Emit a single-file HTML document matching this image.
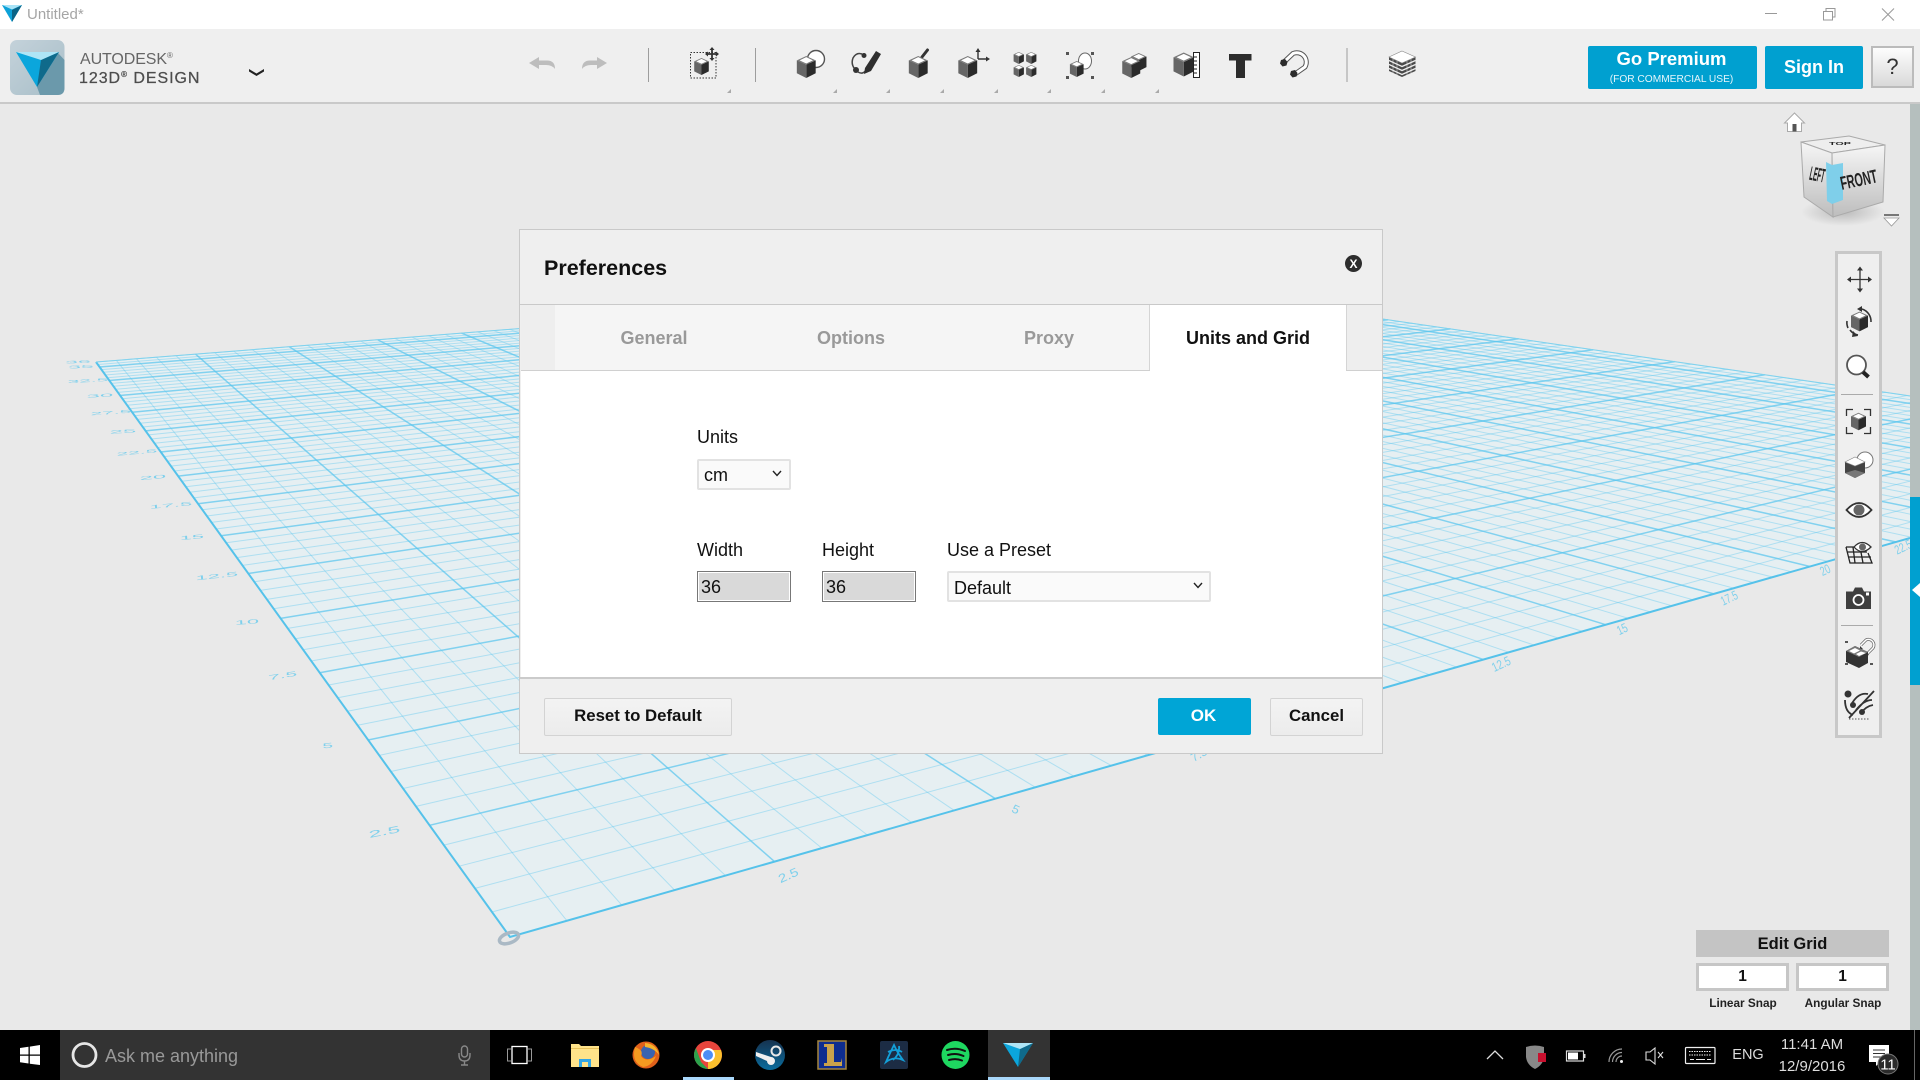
<!DOCTYPE html>
<html lang="en"><head><meta charset="utf-8"><title>Untitled*</title>
<style>
html,body{margin:0;padding:0;width:1920px;height:1080px;overflow:hidden;background:#e9e9e9;font-family:"Liberation Sans",Arial,sans-serif;color:#111}
.a{position:absolute}
.t{position:absolute;white-space:nowrap;line-height:20px;height:20px}
svg{position:absolute;left:0;top:0}
.c{text-align:center}
.b{font-weight:bold}
</style></head>
<body>
<svg id="g" width="1920" height="1080" viewBox="0 0 1920 1080">
<polygon points="510,937 2240,444 1122,281 96,362" fill="#e6eff2"/>
<g id="lines" fill="none" stroke="#55c4ee"></g>
<path d="M96,362 L510,937 L1910,538" fill="none" stroke="#55c2ea" stroke-width="2"/>
<path d="M96,362 L1122,281 L1910,396" fill="none" stroke="#7fd2ee" stroke-width="1"/>
<ellipse cx="509" cy="938" rx="10" ry="5" transform="rotate(-20 509 938)" fill="none" stroke="#aab9c5" stroke-width="3.500"/>
<g font-family="Liberation Sans,Arial,sans-serif" font-size="10" fill="#7fd0ec" text-anchor="middle">
<text transform="translate(385,835) rotate(-11) scale(2.3,.95)">2.5</text>
<text transform="translate(328,748) rotate(-6) scale(1.9,.7)">5</text>
<text transform="translate(283,678) rotate(-9) scale(2.1,.7)">7.5</text>
<text transform="translate(247,624) rotate(-4) scale(2.2,.6)">10</text>
<text transform="translate(217,578) rotate(-6) scale(2.2,.6)">12.5</text>
<text transform="translate(192,539) rotate(-5) scale(2.2,.55)">15</text>
<text transform="translate(171,507) rotate(-5) scale(2.2,.5)">17.5</text>
<text transform="translate(153,479) rotate(-5) scale(2.4,.5)">20</text>
<text transform="translate(137,454) rotate(-5) scale(2.1,.45)">22.5</text>
<text transform="translate(123,433) rotate(-3) scale(2.4,.45)">25</text>
<text transform="translate(111,414) rotate(-4) scale(2.1,.42)">27.5</text>
<text transform="translate(100,397) rotate(-3) scale(2.4,.42)">30</text>
<text transform="translate(88,382) rotate(-3) scale(2.1,.4)">32.5</text>
<text transform="translate(81,368) rotate(-2) scale(2.3,.38)">35</text>
<text transform="translate(78,363) rotate(-2) scale(2.3,.35)">36</text>
<text transform="translate(790,879) rotate(-24) scale(1.5,1.2)">2.5</text>
<text transform="translate(1014,813) rotate(25) scale(1.3,1.2)">5</text>
<text transform="translate(1201,758) rotate(-30) scale(1.2,1.2)">7.5</text>
<text transform="translate(1503,668) rotate(-25) scale(1,1.3)">12.5</text>
<text transform="translate(1624,633) rotate(-25) scale(.95,1.3)">15</text>
<text transform="translate(1731,602) rotate(-25) scale(.9,1.3)">17.5</text>
<text transform="translate(1827,574) rotate(-25) scale(.9,1.3)">20</text>
<text transform="translate(1905,551) rotate(-25) scale(.9,1.3)">22.5</text>
</g>
</svg>
<script>
(function(){
 var a=4907.5,b=-199.74,c=510,d=136.82,e=232.94,f=937,g=1.41852,h=2.23187;
 function H(u,v){var w=g*u+h*v+1;return [((a*u+b*v+c)/w).toFixed(1),((d*u+e*v+f)/w).toFixed(1)];}
 var s='';
 for(var i=1;i<=72;i++){
  var m=i%5==0,p,q,t=i/72;
  p=H(t,0);q=H(t,1);
  s+='<line x1="'+p[0]+'" y1="'+p[1]+'" x2="'+q[0]+'" y2="'+q[1]+'" stroke-width="'+(m?1.5:1)+'" stroke-opacity="'+(m?.7:.38)+'"/>';
  p=H(0,t);q=H(1,t);
  s+='<line x1="'+p[0]+'" y1="'+p[1]+'" x2="'+q[0]+'" y2="'+q[1]+'" stroke-width="'+(m?1.5:1)+'" stroke-opacity="'+(m?.7:.38)+'"/>';
 }
 document.getElementById('lines').innerHTML=s;
})();
</script>

<!-- title bar + toolbar -->
<div class="a" style="left:0;top:0;width:1920px;height:29px;background:#fff"></div>
<div class="a" style="left:0;top:29px;width:1920px;height:73px;background:#efefef;border-bottom:2px solid #c9c9c9"></div>
<div class="t" style="left:27px;top:5px;font-size:15px;color:#a5a5a5">Untitled*</div>
<div class="t" style="left:80px;top:46px;font-size:16px;color:#666;letter-spacing:-.1px">AUTODESK<span style="font-size:8px;vertical-align:6px">®</span></div>
<div class="t" style="left:79px;top:65px;font-size:16px;color:#4d4d4d;letter-spacing:.95px;-webkit-text-stroke:.25px #4d4d4d">123D<span style="font-size:8px;vertical-align:6px">®</span> DESIGN</div>

<!-- scrollbar -->
<div class="a" style="left:1910px;top:104px;width:10px;height:926px;background:#b5bfbe"></div>
<div class="a" style="left:1910px;top:497px;width:10px;height:188px;background:#00a0d0"></div>

<!-- premium buttons -->
<div class="a" style="left:1588px;top:46px;width:169px;height:43px;background:#00a0d0;border-radius:2px"></div>
<div class="t c b" style="left:1587px;top:49px;width:169px;font-size:18.5px;color:#fff">Go Premium</div>
<div class="t c" style="left:1587px;top:70px;width:169px;font-size:10.2px;color:#e4f5fb">(FOR COMMERCIAL USE)</div>
<div class="a" style="left:1765px;top:46px;width:98px;height:43px;background:#00a0d0;border-radius:2px"></div>
<div class="t c b" style="left:1765px;top:57px;width:98px;font-size:18px;color:#fff">Sign In</div>
<div class="a" style="left:1871px;top:46px;width:39px;height:38px;border:2px solid #bbb;background:linear-gradient(#fdfdfd,#d9d9d9)"></div>
<div class="t c" style="left:1871px;top:57px;width:43px;font-size:22px;color:#333">?</div>

<!-- dialog -->
<div class="a" style="left:519px;top:229px;width:862px;height:523px;background:#efefef;border:1px solid #c9c9c9"></div>
<div class="a" style="left:520px;top:304px;width:862px;height:1px;background:#c9c9c9"></div>
<div class="a" style="left:521px;top:305px;width:861px;height:65px;background:#eeeeee"></div>
<div class="a" style="left:555px;top:305px;width:594px;height:65px;background:#f5f5f5"></div>
<div class="a" style="left:1149px;top:305px;width:198px;height:66px;background:#fff;border-left:1px solid #d5d5d5;border-right:1px solid #d5d5d5;box-sizing:border-box"></div>
<div class="a" style="left:521px;top:370px;width:861px;height:1px;background:#d0d0d0"></div>
<div class="a" style="left:1150px;top:370px;width:196px;height:1px;background:#fff"></div>
<div class="a" style="left:521px;top:371px;width:861px;height:306px;background:#fff"></div>
<div class="a" style="left:520px;top:677px;width:862px;height:2px;background:#cbcbcb"></div>
<div class="t b" style="left:544px;top:258px;font-size:21.5px;line-height:20px;color:#111">Preferences</div>
<div class="t c b" style="left:554px;top:328px;width:200px;font-size:18px;color:#999">General</div>
<div class="t c b" style="left:751px;top:328px;width:200px;font-size:18px;color:#999">Options</div>
<div class="t c b" style="left:949px;top:328px;width:200px;font-size:18px;color:#999">Proxy</div>
<div class="t c b" style="left:1148px;top:328px;width:200px;font-size:18px;color:#111">Units and Grid</div>
<div class="t" style="left:697px;top:427px;font-size:18px">Units</div>
<div class="a" style="left:697px;top:459px;width:90px;height:27px;border:2px solid #e2e2e2;border-radius:2px;background:#fafafa"></div>
<div class="t" style="left:704px;top:465px;font-size:18px">cm</div>
<div class="t" style="left:697px;top:540px;font-size:18px">Width</div>
<div class="t" style="left:822px;top:540px;font-size:18px">Height</div>
<div class="t" style="left:947px;top:540px;font-size:18px">Use a Preset</div>
<div class="a" style="left:697px;top:571px;width:92px;height:29px;border:1px solid #777;box-shadow:inset 0 0 0 1px #fff;background:#d9d9d9"></div>
<div class="a" style="left:822px;top:571px;width:92px;height:29px;border:1px solid #777;box-shadow:inset 0 0 0 1px #fff;background:#d9d9d9"></div>
<div class="t" style="left:701px;top:577px;font-size:18px">36</div>
<div class="t" style="left:826px;top:577px;font-size:18px">36</div>
<div class="a" style="left:947px;top:571px;width:260px;height:27px;border:2px solid #e2e2e2;border-radius:2px;background:#fafafa"></div>
<div class="t" style="left:954px;top:578px;font-size:18px">Default</div>
<div class="a" style="left:544px;top:698px;width:186px;height:36px;border:1px solid #d3d3d3;border-radius:2px;background:linear-gradient(#f3f3f3,#ececec)"></div>
<div class="t c b" style="left:544px;top:706px;width:188px;font-size:16.8px">Reset to Default</div>
<div class="a" style="left:1158px;top:698px;width:93px;height:37px;background:#00a5d6;border-radius:2px"></div>
<div class="t c b" style="left:1157px;top:706px;width:93px;font-size:17px;color:#fff">OK</div>
<div class="a" style="left:1270px;top:698px;width:91px;height:36px;border:1px solid #d3d3d3;border-radius:2px;background:linear-gradient(#f3f3f3,#ececec)"></div>
<div class="t c b" style="left:1270px;top:706px;width:93px;font-size:16.8px">Cancel</div>

<!-- edit grid -->
<div class="a" style="left:1696px;top:930px;width:193px;height:27px;background:#c4c4c4"></div>
<div class="t c b" style="left:1696px;top:934px;width:193px;font-size:16.5px;color:#111">Edit Grid</div>
<div class="a" style="left:1696px;top:963px;width:87px;height:22px;border:3px solid #c6c6c6;background:#fff"></div>
<div class="a" style="left:1796px;top:963px;width:87px;height:22px;border:3px solid #c6c6c6;background:#fff"></div>
<div class="t c b" style="left:1696px;top:967px;width:93px;font-size:15.5px">1</div>
<div class="t c b" style="left:1796px;top:967px;width:93px;font-size:15.5px">1</div>
<div class="t c b" style="left:1693px;top:993px;width:100px;font-size:11.8px;color:#222">Linear Snap</div>
<div class="t c b" style="left:1793px;top:993px;width:100px;font-size:11.8px;color:#222">Angular Snap</div>

<!-- right view panel -->
<div class="a" style="left:1835px;top:251px;width:41px;height:481px;background:#efefef;border:3px solid #c8c8c8"></div>

<!-- taskbar -->
<div class="a" style="left:0;top:1030px;width:1920px;height:50px;background:#000"></div>
<div class="a" style="left:60px;top:1030px;width:430px;height:50px;background:#333"></div>
<div class="a" style="left:988px;top:1030px;width:62px;height:50px;background:#333"></div>
<div class="a" style="left:683px;top:1077px;width:51px;height:3px;background:#a9d8fb"></div>
<div class="a" style="left:988px;top:1077px;width:62px;height:3px;background:#a9d8fb"></div>
<div class="t" style="left:105px;top:1046px;font-size:18px;color:#999">Ask me anything</div>
<div class="t c" style="left:1728px;top:1045px;width:40px;font-size:14.5px;color:#ddd">ENG</div>
<div class="t c" style="left:1772px;top:1035px;width:80px;font-size:15px;color:#ddd">11:41 AM</div>
<div class="t c" style="left:1772px;top:1057px;width:80px;font-size:15px;color:#ddd">12/9/2016</div>

<!-- icon layer -->
<svg width="1920" height="1080" viewBox="0 0 1920 1080">
<defs>
<symbol id="cube" viewBox="0 0 24 28" overflow="visible">
<polygon points="12,11 24,5.500 24,22 12,28" fill="#2b2b2b"/>
<polygon points="0,5.500 12,11 12,28 0,22" fill="#666"/>
<polygon points="12,0 24,5.500 12,11 0,5.500" fill="#7a7a7a"/>
<polygon points="12,1.500 20.500,5.500 12,9.500 3.500,5.500" fill="#fff"/>
</symbol>
<linearGradient id="cl" x1="0" y1="0" x2="0" y2="1"><stop offset="0" stop-color="#f6f6f6"/><stop offset="1" stop-color="#bdbdbd"/></linearGradient>
<linearGradient id="lg" x1="0" y1="0" x2="1" y2="1"><stop offset="0" stop-color="#c4d2da"/><stop offset="1" stop-color="#a8bec8"/></linearGradient>
<linearGradient id="st" x1="0" y1="0" x2="0" y2="1"><stop offset="0" stop-color="#16324f"/><stop offset="1" stop-color="#0a6c9d"/></linearGradient>
<radialGradient id="sh" cx=".5" cy=".5" r=".5"><stop offset="0" stop-color="#000" stop-opacity=".2"/><stop offset="1" stop-color="#000" stop-opacity="0"/></radialGradient>
</defs>

<!-- title icon -->
<polygon points="2,5 22,5 12,22" fill="#0ca1d8"/><polygon points="22,5 12,10 12,22" fill="#0a6386"/><polygon points="2,5 22,5 12,9.500" fill="#a9e3f6"/>
<!-- window controls -->
<path d="M1765,13.500H1777" stroke="#999" fill="none"/>
<path d="M1823.500,11.500h9v8.500h-9zM1826,11.500V8.500h9v8.500h-2.500" stroke="#999" fill="none"/>
<path d="M1882,8.500L1894,20.500M1894,8.500L1882,20.500" stroke="#999" fill="none"/>

<!-- logo -->
<rect x="10" y="40" width="54.500" height="55" rx="7" fill="url(#lg)"/>
<path d="M57,52 L64.500,60 V88 Q64.500,95 57.500,95 H40 L37,87Z" fill="#6b99ab"/>
<polygon points="16,52 59,52 37,87" fill="#0ba6dc"/>
<polygon points="59,52 41,60 37,87" fill="#0f6a8b"/>
<polygon points="16,52 59,52 41,60" fill="#aee5f6"/>
<path d="M249,69 L256.500,73.500 L264,69 L264,71.500 L256.500,76 L249,71.500Z" fill="#222"/>

<!-- undo/redo -->
<path d="M529,63 L539,57 V60.500 H547 Q555,60.500 555,69 Q552,65 546,65 H539 V69Z" fill="#bdbdbd"/>
<path d="M607,63 L597,57 V60.500 H590 Q582,60.500 582,69 Q585,65 591,65 H597 V69Z" fill="#bdbdbd"/>
<!-- separators -->
<path d="M648.500,48V82M755.500,48V82M1347,48V82" stroke="#888" stroke-width="1" stroke-opacity=".8"/>

<!-- corner markers -->
<g fill="#aaa"><polygon points="727,93 731,93 731,89"/><polygon points="833,93 837,93 837,89"/><polygon points="886,93 890,93 890,89"/><polygon points="940,93 944,93 944,89"/><polygon points="994,93 998,93 998,89"/><polygon points="1047,93 1051,93 1051,89"/><polygon points="1101,93 1105,93 1105,89"/><polygon points="1155,93 1159,93 1159,89"/></g>

<!-- move -->
<rect x="690.500" y="52.500" width="25.500" height="25.500" fill="none" stroke="#333" stroke-dasharray="1.500 1.500"/>
<use href="#cube" x="694" y="58" width="15" height="17"/>
<path d="M712,48V60M706,54H718" stroke="#333" stroke-width="1.800"/>
<path d="M712,47l2.500,3h-5zM712,61l2.500,-3h-5zM705,54l3,-2.500v5zM719,54l-3,-2.500v5z" fill="#333"/>
<!-- combine -->
<circle cx="816" cy="59" r="8.500" fill="#fff" stroke="#555" stroke-width="1.400"/>
<use href="#cube" x="796" y="56" width="20.500" height="22"/>
<!-- sketch -->
<path d="M864,55 Q857,51 853,58 Q850,66 858,72 Q863,75 866,70" fill="none" stroke="#444" stroke-width="1.500"/>
<circle cx="864" cy="55.500" r="2.500" fill="#333"/><circle cx="856" cy="70" r="3" fill="#333"/>
<path d="M876,51 L881,54 L871,71 L864,74 L865,68Z" fill="#2f2f2f"/>
<!-- modify -->
<path d="M922,57 L927.500,50" stroke="#333" stroke-width="3" stroke-linecap="round"/>
<use href="#cube" x="908" y="56" width="20.500" height="22"/>
<!-- transform -->
<use href="#cube" x="957.500" y="56" width="20.500" height="22"/>
<path d="M978,59V50M978,59H988" stroke="#333" stroke-width="1.400"/><path d="M978,48l2.500,4h-5zM990,59l-4,-2.500v5z" fill="#333"/>
<!-- pattern -->
<use href="#cube" x="1013.500" y="52" width="10.500" height="12"/><use href="#cube" x="1026" y="52" width="10.500" height="12"/>
<use href="#cube" x="1013.500" y="65" width="10.500" height="12"/><use href="#cube" x="1026" y="65" width="10.500" height="12"/>
<!-- boolean -->
<ellipse cx="1085" cy="61" rx="6.500" ry="8" fill="#fff" stroke="#666"/>
<use href="#cube" x="1069.500" y="61" width="14.500" height="16"/>
<g fill="#555"><rect x="1066" y="52" width="3" height="3"/><rect x="1091" y="52" width="3" height="3"/><rect x="1066" y="76" width="3" height="3"/><rect x="1091" y="76" width="3" height="3"/></g>
<!-- group -->
<use href="#cube" x="1131" y="53" width="15.500" height="18"/>
<use href="#cube" x="1121" y="57" width="20.500" height="21"/>
<!-- measure -->
<use href="#cube" x="1173.500" y="51" width="20.500" height="27"/>
<rect x="1193.500" y="52.500" width="6" height="25" fill="#fff" stroke="#222"/>
<path d="M1194,57h3M1194,61h3M1194,65h3M1194,69h3M1194,73h3" stroke="#222"/>
<!-- T -->
<path d="M1229,54H1251.500V60.500H1245V78H1236V60.500H1229Z" fill="#2c2c2c"/>
<!-- magnet -->
<path d="M1284,62 L1293,53.500 A9.500,9.500 0 0 1 1305,67 L1295,74" fill="none" stroke="#555" stroke-width="5"/>
<path d="M1284,62 L1293,53.500 A9.500,9.500 0 0 1 1305,67 L1295,74" fill="none" stroke="#fff" stroke-width="3"/>
<path d="M1281,60l4,-1 2.500,3 -1,3.500 -4,1 -2.500,-3zM1291,71l4,-1 2.500,3 -1,3.500 -4,1 -2.500,-3z" fill="#2c2c2c"/>
<!-- stack -->
<polygon points="1402,51 1415.500,57 1415.500,71 1402,77 1389,71 1389,57" fill="#4a4a4a"/>
<polygon points="1402,51 1415.500,57 1402,63 1389,57" fill="#fff" stroke="#888" stroke-width=".6"/>
<path d="M1389,60.500l13,6 13.500,-6M1389,64.500l13,6 13.500,-6M1389,68.500l13,6 13.500,-6" fill="none" stroke="#eee" stroke-width="1.300"/>
<path d="M1393,59V73M1397,61V75M1407,61V75M1411,59V73" stroke="#eee" stroke-width=".7" stroke-opacity=".7"/>

<!-- home -->
<polygon points="1794.500,113 1804.500,123 1801.500,123 1801.500,131.500 1787.500,131.500 1787.500,123 1784.500,123" fill="#fff" stroke="#aaa"/>
<rect x="1792.500" y="124" width="4" height="7.500" fill="#555"/>
<!-- cube -->
<ellipse cx="1843" cy="212" rx="42" ry="14" fill="url(#sh)"/>
<polygon points="1849,136 1885,145 1832,153 1801,142" fill="#eeeeee" stroke="#aaa"/>
<polygon points="1801,142 1832,153 1833,217 1804,197" fill="url(#cl)" stroke="#aaa"/>
<polygon points="1832,153 1885,145 1883,202 1833,217" fill="url(#cl)" stroke="#aaa"/>
<polygon points="1826,162 1832,165 1843,163 1843,200 1832,204 1827,201" fill="#7fcfea"/>
<text transform="translate(1840,145) scale(.9,.35)" font-size="12" font-weight="bold" text-anchor="middle" fill="#222" font-family="Liberation Sans,Arial,sans-serif">TOP</text>
<text transform="translate(1816,181) rotate(12) scale(.4,1.3)" font-size="15" font-weight="bold" text-anchor="middle" fill="#222" font-family="Liberation Sans,Arial,sans-serif">LEFT</text>
<text transform="translate(1860,186) rotate(-12) scale(.6,1.05)" font-size="18" font-weight="bold" text-anchor="middle" fill="#222" font-family="Liberation Sans,Arial,sans-serif">FRONT</text>
<polygon points="1884,214 1899,214 1899,216 1884,216" fill="#777"/>
<polygon points="1884,218 1899,218 1891.500,226" fill="#fff" stroke="#999" stroke-width=".8"/>

<!-- scrollbar arrow -->
<polygon points="1920,583 1920,597 1912,590" fill="#fff"/>

<!-- right panel -->
<path d="M1860,268V291M1848,279.500H1871" stroke="#333" stroke-width="1.300"/>
<path d="M1860,266.500l3,4h-6zM1860,292.500l3,-4h-6zM1847,279.500l4,-3v6zM1872,279.500l-4,-3v6z" fill="#333"/>
<path d="M1848,328 A13,13 0 0 1 1847,321 M1862,309 A13,13 0 0 1 1871,322 M1850,330 A13,13 0 0 0 1858,335" fill="none" stroke="#333" stroke-width="1.600"/>
<path d="M1857,309l5,-3 0,6zM1853,331l5,5 -6,1z" fill="#333"/>
<use href="#cube" x="1851" y="311" width="17" height="21"/>
<circle cx="1856.500" cy="365" r="9.500" fill="#fff" stroke="#555" stroke-width="1.800"/>
<path d="M1863,372 L1868.500,377" stroke="#222" stroke-width="4"/>
<path d="M1841,394.500H1873M1841,625.500H1873" stroke="#aaa"/>
<path d="M1846.500,416V409.500H1853M1864,409.500H1870.500V416M1870.500,427V433.500H1864M1853,433.500H1846.500V427" fill="none" stroke="#333" stroke-width="1.300"/>
<use href="#cube" x="1851" y="412" width="15" height="19"/>
<circle cx="1865" cy="460" r="8" fill="#fff" stroke="#777"/>
<polygon points="1845,462 1855,457 1865,462 1865,473 1855,478 1845,473" fill="#444"/>
<polygon points="1845,462 1855,457 1865,462 1855,466" fill="#fff" stroke="#888" stroke-width=".6"/>
<polygon points="1855,470 1865,473 1855,478 1845,473" fill="#777"/>
<path d="M1846.500,510 Q1859,496 1871.500,510 Q1859,524 1846.500,510Z" fill="#fff" stroke="#333" stroke-width="1.800"/>
<circle cx="1859" cy="510" r="5.500" fill="#666"/>
<path d="M1846,547H1862M1847,552H1867M1849,557H1871M1853,547L1855,563M1860,547L1863,563M1846,547L1850,563H1872L1868,553" fill="none" stroke="#222" stroke-width="1.300"/>
<path d="M1854,547 Q1862,538 1871,547 Q1862,556 1854,547Z" fill="#fff" stroke="#333" stroke-width="1.300"/><circle cx="1862.500" cy="547" r="3.500" fill="#666"/>
<path d="M1846,591.500H1853L1855,587.500H1862L1864,591.500H1871V609H1846Z" fill="#3f3f3f"/>
<circle cx="1858.500" cy="600" r="5" fill="none" stroke="#fff" stroke-width="1.800"/><rect x="1866" y="592.500" width="3" height="3" fill="#fff"/>
<path d="M1861,645 L1866,640 A5.500,5.500 0 0 1 1873,648 L1868,653" fill="none" stroke="#666" stroke-width="3"/>
<path d="M1861,645 L1866,640 A5.500,5.500 0 0 1 1873,648 L1868,653" fill="none" stroke="#fff" stroke-width="1.500"/>
<path d="M1860,646l3,3 -3,1zM1867,652l2,3 -3,1z" fill="#333"/>
<polygon points="1846,651 1855,646 1868,652 1868,663 1859,668 1846,662" fill="#333"/>
<polygon points="1846,651 1855,646 1868,652 1859,657" fill="#777"/>
<polygon points="1849,651 1855,648 1860,650.500 1854,653.500" fill="#fff"/><polygon points="1856,654 1861,651.500 1866,653 1859,656" fill="#fff"/>
<path d="M1845,642h3M1845,664h3M1870,664h3" stroke="#222" stroke-width="1.500"/>
<path d="M1845,700 Q1845,712 1853,715 M1851,705 Q1858,692 1868,694 M1856,710 Q1864,700 1872,700 M1860,714 Q1866,706 1873,705 M1849,718 L1874,691" fill="none" stroke="#333" stroke-width="1.800"/>
<circle cx="1848" cy="694" r="3.500" fill="#333"/><circle cx="1853" cy="705" r="3" fill="#333"/><circle cx="1862" cy="712" r="3" fill="#333"/>
<path d="M1849,719h20" stroke="#555" stroke-dasharray="1.500 1.500"/>

<!-- windows logo -->
<polygon points="20,1048 28.500,1046.800 28.500,1054.500 20,1054.500" fill="#fff"/><polygon points="29.800,1046.600 40,1045 40,1054.500 29.800,1054.500" fill="#fff"/>
<polygon points="20,1055.800 28.500,1055.800 28.500,1063.500 20,1062.300" fill="#fff"/><polygon points="29.800,1055.800 40,1055.800 40,1065 29.800,1063.700" fill="#fff"/>
<circle cx="84.500" cy="1055" r="11.500" fill="none" stroke="#e6e6e6" stroke-width="2.800"/>
<!-- mic -->
<rect x="461.500" y="1046" width="6" height="11" rx="3" fill="none" stroke="#888" stroke-width="1.400"/>
<path d="M459,1053 V1055 Q459,1061 464.500,1061 Q470,1061 470,1055 V1053M464.500,1061V1065M461,1065H468" fill="none" stroke="#888" stroke-width="1.400"/>
<!-- task view -->
<rect x="512" y="1046.500" width="15" height="17" fill="none" stroke="#fff" stroke-width="1.300"/>
<path d="M511,1049H507.500V1061H511M528,1049H531.500V1061H528" fill="none" stroke="#999"/>
<!-- explorer -->
<path d="M571,1044h8l2,2h18v21H571z" fill="#ffe38a"/><path d="M571,1048h28v1H571z" fill="#e8c25a"/>
<path d="M579,1059h12v8h-3v-5h-6v5h-3z" fill="#33a6e6"/>
<!-- firefox -->
<circle cx="646" cy="1055" r="13.500" fill="#e0601a"/><circle cx="648" cy="1052" r="7" fill="#3a63b0"/><path d="M635,1047 Q644,1050 641,1056 Q646,1063 656,1056 Q652,1066 643,1067 Q631,1062 635,1047Z" fill="#f59a20"/><path d="M645,1043 Q657,1044 659,1055 Q654,1048 645,1047Z" fill="#f7b32b"/>
<!-- chrome -->
<circle cx="708" cy="1055" r="14" fill="#e8453c"/><path d="M695.900,1048 L701,1062 L708,1069 A14,14 0 0 1 695.900,1048Z" fill="#2ba24c"/><path d="M708,1069 A14,14 0 0 0 721,1050 L708,1050Z" fill="#fbc02d"/>
<circle cx="708" cy="1055" r="7" fill="#fff"/><circle cx="708" cy="1055" r="5" fill="#4d8ef6"/>
<!-- steam -->
<circle cx="770" cy="1055" r="15" fill="url(#st)"/><circle cx="776" cy="1051" r="4.500" fill="none" stroke="#e8e8e8" stroke-width="2"/>
<path d="M756,1056 L767,1061 A4,4 0 1 0 771,1057 L756,1052Z" fill="#f0f0f0"/>
<!-- league -->
<rect x="818" y="1041" width="28" height="28" fill="#0e2d8f" stroke="#a6863e" stroke-width="1.500"/>
<path d="M824,1044H834V1062H841L842,1058V1066H824V1063H827V1047H824Z" fill="#c9a24b"/>
<!-- battle.net -->
<rect x="880" y="1041" width="28" height="28" rx="2" fill="#1c2c44"/>
<path d="M894,1045 Q890,1053 886,1062 Q894,1056 903,1060 Q897,1052 894,1045ZM888,1052 Q896,1048 902,1052M893,1060 Q900,1054 899,1046" fill="none" stroke="#139fd8" stroke-width="1.800"/>
<!-- spotify -->
<circle cx="955.500" cy="1055" r="14" fill="#1ed760"/>
<path d="M947,1050 Q956,1047 965,1051M948,1055 Q956,1052.500 963.500,1056M949,1060 Q956,1058 962,1060.500" fill="none" stroke="#111" stroke-width="2" stroke-linecap="round"/>
<!-- 123d -->
<polygon points="1003,1043 1033,1043 1018,1067" fill="#0ba6dc"/><polygon points="1033,1043 1020,1049 1018,1067" fill="#0f6a8b"/><polygon points="1003,1043 1033,1043 1020,1049" fill="#aee5f6"/>

<!-- tray -->
<path d="M1487,1059 L1495,1051 L1503,1059" fill="none" stroke="#ddd" stroke-width="1.300"/>
<path d="M1526,1047 Q1535,1044 1544,1047 V1057 Q1543,1065 1535,1069 Q1527,1065 1526,1057Z" fill="#888"/>
<rect x="1538" y="1053" width="8" height="9" fill="#c8102e"/>
<rect x="1566.500" y="1051" width="17" height="10" fill="none" stroke="#ddd" stroke-width="1.200"/><rect x="1568" y="1052.500" width="10" height="7" fill="#fff"/><rect x="1584" y="1054" width="1.500" height="4" fill="#ddd"/>
<path d="M1609,1062 A13,13 0 0 1 1622,1049M1612.500,1062 A9.500,9.500 0 0 1 1622,1052.500M1616,1062 A6,6 0 0 1 1622,1056" fill="none" stroke="#999" stroke-width="1.200"/><circle cx="1621.500" cy="1061.500" r="1.500" fill="#eee"/>
<path d="M1646,1052H1650L1655,1048V1064L1650,1060H1646Z" fill="none" stroke="#ddd" stroke-width="1.100"/>
<path d="M1658,1052L1663,1058M1663,1052L1658,1058" stroke="#ddd" stroke-width="1.100"/>
<rect x="1685.500" y="1047.500" width="29.500" height="16" rx="1" fill="none" stroke="#eee" stroke-width="1.200"/>
<path d="M1689,1051.500H1711M1689,1055H1711" stroke="#eee" stroke-dasharray="1.500 1" fill="none"/><path d="M1690,1059.500H1694M1696,1059.500H1705M1707,1059.500H1711" stroke="#eee"/>
<polygon points="1869,1045 1889,1045 1889,1062 1880,1062 1876,1066 1876,1062 1869,1062" fill="#fff"/>
<path d="M1873,1050H1885M1873,1053.500H1885M1873,1057H1885" stroke="#333"/>
<circle cx="1888" cy="1064" r="10" fill="#2b2b2b" stroke="#777"/>
<text x="1888" y="1069.500" font-size="15" fill="#fff" text-anchor="middle" font-family="Liberation Sans,Arial,sans-serif">11</text>
<path d="M1914.500,1030V1080" stroke="#666"/>

<!-- dialog glyphs -->
<circle cx="1353.500" cy="263.500" r="8.500" fill="#2d2d2d"/>
<text x="1353.500" y="268" font-size="12" font-weight="bold" fill="#fff" text-anchor="middle" font-family="Liberation Sans,Arial,sans-serif">X</text>
<path d="M773,471 L777,475.500 L781,471M1194,583 L1198,587.500 L1202,583" fill="none" stroke="#222" stroke-width="1.400"/>
</svg>
</body></html>
